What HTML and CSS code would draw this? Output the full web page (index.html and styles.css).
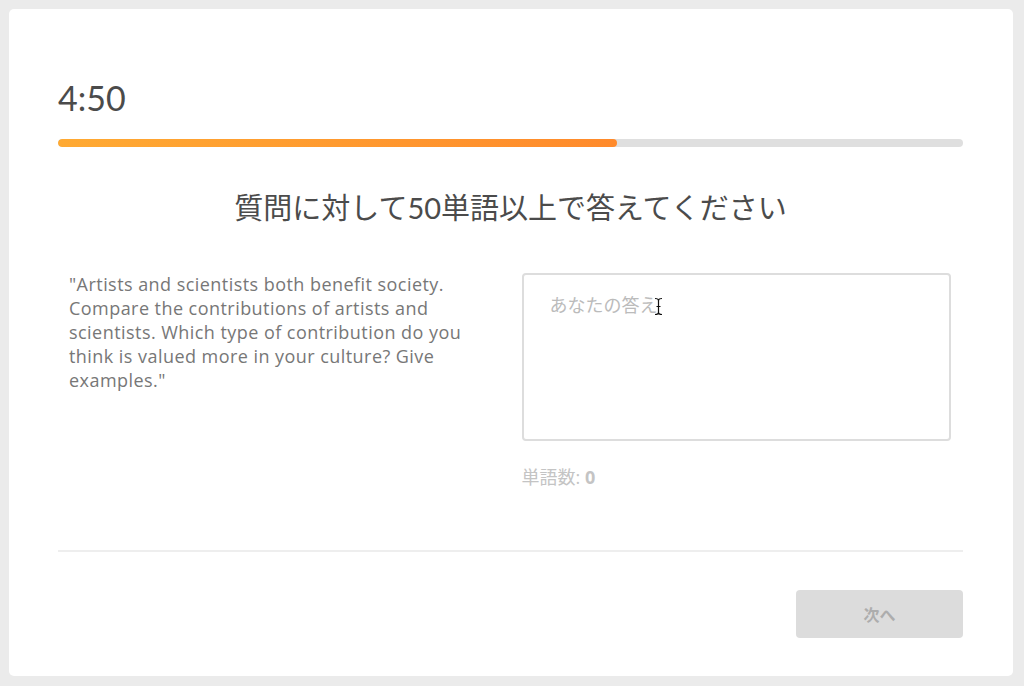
FILE: index.html
```html
<!DOCTYPE html>
<html lang="ja">
<head>
  <meta charset="UTF-8" />
  <title>ライティング | テスト</title>
  <meta name="viewport" content="width=device-width, initial-scale=1.0" />
  <link rel="stylesheet" href="styles.css">
</head>
<body>

  <div class="card">
    <div class="timer">4:50</div>
    <div class="progress">
      <div class="progress-fill" style="width: 61.8%;"></div>
    </div>

    <h1 class="question-title">質問に対して50単語以上で答えてください</h1>

    <div class="columns">
      <div class="col">
        <p class="prompt">"Artists and scientists both benefit society. Compare the contributions of artists and scientists. Which type of contribution do you think is valued more in your culture? Give examples."</p>
      </div>
      <div class="col">
        <div class="answer-wrap">
          <textarea class="answer" placeholder="あなたの答え"></textarea>
          <svg class="ibeam" width="9" height="19" viewBox="0 0 9 19">
            <path d="M1 1.5 C3 1.5 4.5 2 4.5 3.5 C4.5 2 6 1.5 8 1.5 M4.5 3.5 V15.5 M1 17.5 C3 17.5 4.5 17 4.5 15.5 C4.5 17 6 17.5 8 17.5 M2.5 9.5 H6.5" fill="none" stroke="#fff" stroke-width="3"/>
            <path d="M1 1.5 C3 1.5 4.5 2 4.5 3.5 C4.5 2 6 1.5 8 1.5 M4.5 3.5 V15.5 M1 17.5 C3 17.5 4.5 17 4.5 15.5 C4.5 17 6 17.5 8 17.5 M2.5 9.5 H6.5" fill="none" stroke="#111" stroke-width="1.2"/>
          </svg>
        </div>
        <div class="word-count">単語数: <b>0</b></div>
      </div>
    </div>

    <hr class="divider" />

    <div class="footer">
      <button class="next-btn" disabled>次へ</button>
    </div>
  </div>

</body>
</html>
```

FILE: styles.css
```css
body {
  margin: 0;
  padding: 9px 11px 10px 9px;
  background: #EBEBEB;
  font-family: Lato, "Noto Sans CJK JP", sans-serif;
  color: #4B4B4B;
}

.card {
  background: white;
  border-radius: 5px;
  height: 667px;
  box-sizing: border-box;
  padding: 68px 50px 0 49px;
}

.timer {
  font-size: 34px;
  line-height: 41px;
  color: #4B4B4B;
}

.progress {
  margin-top: 21px;
  height: 8px;
  border-radius: 4px;
  background: #DFDFDF;
  overflow: hidden;
}

.progress-fill {
  height: 100%;
  border-radius: 4px;
  background: linear-gradient(to right, #FFAA33, #FF8A2B);
}

.question-title {
  margin: 41px 0 0;
  font-size: 29px;
  line-height: 40px;
  font-weight: 400;
  text-align: center;
  color: #4B4B4B;
}

.columns {
  display: grid;
  grid-template-columns: 1fr 1fr;
  margin-top: 44px;
}

.col {
  padding: 0 12px 0 11px;
}

.prompt {
  margin: 0;
  font-family: "Open Sans", "Noto Sans CJK JP", sans-serif;
  font-size: 18px;
  letter-spacing: 0.45px;
  line-height: 24px;
  color: #777;
}

.answer-wrap {
  position: relative;
  margin-top: 1px;
}

.answer {
  display: block;
  width: 100%;
  height: 168px;
  box-sizing: border-box;
  padding: 18px 26px;
  border: 2px solid #DDDDDD;
  border-radius: 4px;
  font-family: Lato, "Noto Sans CJK JP", sans-serif;
  font-size: 18px;
  line-height: 24px;
  color: #4B4B4B;
  resize: none;
  outline: none;
}

.answer::placeholder {
  color: #BBBBBB;
}

.ibeam {
  position: absolute;
  left: 132px;
  top: 24px;
}

.word-count {
  margin-top: 24px;
  font-family: "Open Sans", "Noto Sans CJK JP", sans-serif;
  font-size: 18px;
  line-height: 24px;
  color: #C4C4C4;
}

.word-count b {
  font-weight: 700;
}

.divider {
  margin: 61px 0 0;
  border: none;
  border-top: 2px solid #EEEEEE;
}

.footer {
  display: flex;
  justify-content: flex-end;
  margin-top: 38px;
}

.next-btn {
  width: 167px;
  height: 48px;
  border: none;
  border-radius: 4px;
  background: #DCDCDC;
  color: #ADADAD;
  font-family: Lato, "Noto Sans CJK JP", sans-serif;
  font-size: 16px;
  font-weight: 700;
}
```
